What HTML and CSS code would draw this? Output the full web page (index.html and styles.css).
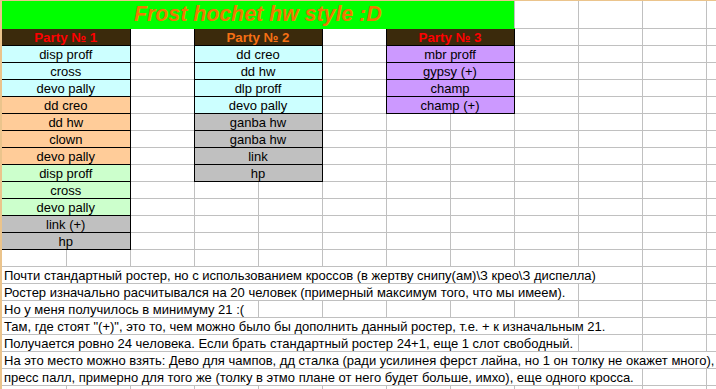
FILE: index.html
```html
<!DOCTYPE html>
<html lang="ru">
<head>
<meta charset="utf-8">
<title>Frost hochet hw style :D</title>
<link rel="stylesheet" href="styles.css">
</head>
<body>
<div class="sheet">
<table class="grid">
<colgroup>
<col class="col"><col class="col"><col class="col"><col class="col"><col class="col"><col class="col">
<col class="col"><col class="col"><col class="col"><col class="col"><col class="col"><col class="col">
</colgroup>
<tr class="r-title"><td class="title" colspan="8">Frost hochet hw style :D</td><td></td><td></td><td></td><td></td></tr>
<tr><td class="hdr red" colspan="2">Party № 1</td><td></td><td class="hdr orange" colspan="2">Party № 2</td><td></td><td class="hdr red" colspan="2">Party № 3</td><td></td><td></td><td></td><td></td></tr>
<tr><td class="pc cy" colspan="2">disp proff</td><td></td><td class="pc cy" colspan="2">dd creo</td><td></td><td class="pc vi" colspan="2">mbr proff</td><td></td><td></td><td></td><td></td></tr>
<tr><td class="pc cy" colspan="2">cross</td><td></td><td class="pc cy" colspan="2">dd hw</td><td></td><td class="pc vi" colspan="2">gypsy (+)</td><td></td><td></td><td></td><td></td></tr>
<tr><td class="pc cy" colspan="2">devo pally</td><td></td><td class="pc cy" colspan="2">dlp proff</td><td></td><td class="pc vi" colspan="2">champ</td><td></td><td></td><td></td><td></td></tr>
<tr><td class="pc pe" colspan="2">dd creo</td><td></td><td class="pc cy" colspan="2">devo pally</td><td></td><td class="pc vi" colspan="2">champ (+)</td><td></td><td></td><td></td><td></td></tr>
<tr><td class="pc pe" colspan="2">dd hw</td><td></td><td class="pc gr" colspan="2">ganba hw</td><td></td><td></td><td></td><td></td><td></td><td></td><td></td></tr>
<tr><td class="pc pe" colspan="2">clown</td><td></td><td class="pc gr" colspan="2">ganba hw</td><td></td><td></td><td></td><td></td><td></td><td></td><td></td></tr>
<tr><td class="pc pe" colspan="2">devo pally</td><td></td><td class="pc gr" colspan="2">link</td><td></td><td></td><td></td><td></td><td></td><td></td><td></td></tr>
<tr><td class="pc gn" colspan="2">disp proff</td><td></td><td class="pc gr" colspan="2">hp</td><td></td><td></td><td></td><td></td><td></td><td></td><td></td></tr>
<tr><td class="pc gn" colspan="2">cross</td><td></td><td></td><td></td><td></td><td></td><td></td><td></td><td></td><td></td><td></td></tr>
<tr><td class="pc gn" colspan="2">devo pally</td><td></td><td></td><td></td><td></td><td></td><td></td><td></td><td></td><td></td><td></td></tr>
<tr><td class="pc gr" colspan="2">link (+)</td><td></td><td></td><td></td><td></td><td></td><td></td><td></td><td></td><td></td><td></td></tr>
<tr><td class="pc gr" colspan="2">hp</td><td></td><td></td><td></td><td></td><td></td><td></td><td></td><td></td><td></td><td></td></tr>
<tr><td></td><td></td><td></td><td></td><td></td><td></td><td></td><td></td><td></td><td></td><td></td><td></td></tr>
<tr><td class="txt" colspan="10">Почти стандартный ростер, но с использованием кроссов (в жертву снипу(ам)\З крео\З диспелла)</td><td></td><td></td></tr>
<tr><td class="txt" colspan="9">Ростер изначально расчитывался на 20 человек (примерный максимум того, что мы имеем).</td><td></td><td></td><td></td></tr>
<tr><td class="txt" colspan="4">Но у меня получилось в минимуму 21 :(</td><td></td><td></td><td></td><td></td><td></td><td></td><td></td><td></td></tr>
<tr><td class="txt" colspan="10">Там, где стоят "(+)", это то, чем можно было бы дополнить данный ростер, т.е. + к изначальным 21.</td><td></td><td></td></tr>
<tr><td class="txt" colspan="9">Получается ровно 24 человека. Если брать стандартный ростер 24+1, еще 1 слот свободный.</td><td></td><td></td><td></td></tr>
<tr><td class="txt" colspan="12">На это место можно взять: Дево для чампов, дд сталка (ради усилинея ферст лайна, но 1 он толку не окажет много),</td></tr>
<tr><td class="txt" colspan="10">пресс палл, примерно для того же (толку в этмо плане от него будет больше, имхо), еще одного кросса.</td><td></td><td></td></tr>
<tr><td></td><td></td><td></td><td></td><td></td><td></td><td></td><td></td><td></td><td></td><td></td><td></td></tr>
</table>
</div>
</body>
</html>
```

FILE: styles.css
```css
html, body {
  margin: 0;
  padding: 0;
  background: #ffffff;
  overflow: hidden;
  width: 716px;
  height: 389px;
}

.sheet {
  border-top: 1px solid #ebc48c;
  border-left: 2px solid #ebc48c;
  width: 714px;
  height: 388px;
  overflow: hidden;
}

.grid {
  border-collapse: collapse;
  table-layout: fixed;
  width: 768px;
  border-top: hidden;
  border-left: hidden;
  font-family: "Liberation Sans", Arial, sans-serif;
  font-size: 13px;
  color: #000000;
}

.col {
  width: 64px;
}

.grid tr {
  height: 17px;
}

.grid td {
  border-left: 1px solid #c0c0c0;
  border-top: 1px solid #c0c0c0;
  padding: 0 2px;
  line-height: 15px;
  vertical-align: bottom;
  white-space: nowrap;
  overflow: visible;
}

.grid .r-title {
  height: 27px;
}

.grid .title {
  background: #00ff00;
  border-bottom: 1px solid #00ff00;
  color: #f07800;
  font-size: 21.33px;
  font-weight: bold;
  font-style: italic;
  text-align: center;
  line-height: 24px;
  vertical-align: middle;
}

.grid .hdr {
  background: #3b2a0c;
  border: 1px solid #000000;
  font-weight: bold;
  font-size: 13.33px;
  text-align: center;
}

.red { color: #ff0000; }
.orange { color: #f57014; }

.grid .pc {
  border: 1px solid #000000;
  text-align: center;
}

.cy { background: #ccffff; }
.pe { background: #ffcc99; }
.gn { background: #ccffcc; }
.gr { background: #c0c0c0; }
.vi { background: #cc99ff; }

.grid .txt {
  text-align: left;
  padding-left: 2px;
}
```
